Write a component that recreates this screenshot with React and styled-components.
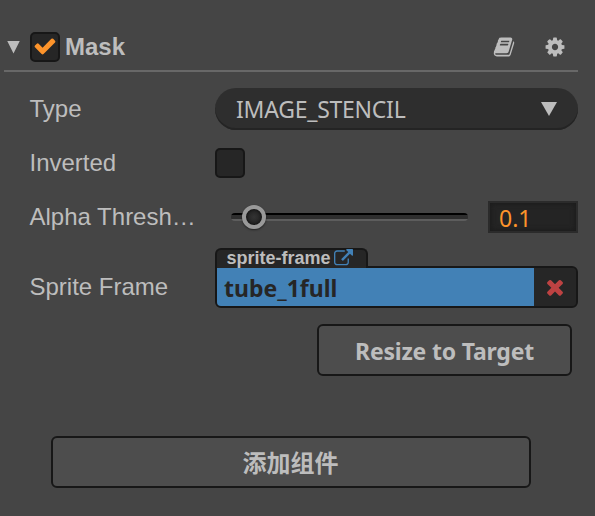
import React from "react";
import styled, { createGlobalStyle } from "styled-components";

const GlobalStyle = createGlobalStyle`
  *, *::before, *::after { box-sizing: border-box; }
  body { margin: 0; background: #454545; }
`;

const sans = `"Liberation Sans", Arial, sans-serif`;
const ui = `"Noto Sans", "Open Sans", "Noto Sans CJK SC", sans-serif`;

const Panel = styled.main`
  width: 595px;
  height: 516px;
  padding: 22px 17px 0 4px;
  background: #454545;
  color: #bdbdbd;
  font: 24px/28px ${sans};
  overflow: hidden;
`;

const Header = styled.header`
  display: flex;
  align-items: center;
  height: 50px;
  padding: 2px 12px 0 3px;
  border-bottom: 2px solid #686868;
`;

const Arrow = styled.span`
  width: ${(p) => p.$w}px;
  height: ${(p) => p.$h}px;
  flex: none;
  background: #bdbdbd;
  clip-path: polygon(0 0, 100% 0, 50% 100%);
`;

const Check = styled.span`
  display: grid;
  place-items: center;
  width: 30px;
  height: 30px;
  flex: none;
  border: 2px solid #171717;
  border-radius: 5px;
  background: #262626;
  color: #fd942b;
`;

const HeaderCheck = styled(Check)`
  margin: 0 5px 0 10px;
  padding-bottom: 2px;
`;

const Title = styled.h1`
  flex: 1;
  margin: 0;
  font-size: 24px;
  line-height: 28px;
`;

const Tools = styled.div`
  display: flex;
  gap: 29.5px;
`;

const Glyph = styled.svg`
  display: block;
  width: ${(p) => p.$size}px;
  height: ${(p) => p.$size}px;
  fill: currentColor;
`;

const Row = styled.div`
  display: flex;
  align-items: center;
  height: 54px;
  padding-left: 25.5px;
`;

const AssetRow = styled(Row)`
  height: 86px;
`;

const Rows = styled.section`
  padding-top: 10px;
`;

const Label = styled.span`
  flex: none;
  width: 170px;
  margin-right: 15.5px;
  white-space: nowrap;
`;

const Select = styled.div`
  display: flex;
  flex: 1;
  align-items: center;
  justify-content: space-between;
  height: 42px;
  padding: 0 21px;
  border-radius: 21px;
  background: #2e2e2e;
  box-shadow: inset 0 -2px 0 #242424;
  font: 23px/32px ${ui};
  letter-spacing: -0.25px;
`;

const Slider = styled.div`
  display: flex;
  align-items: center;
  width: 237px;
  height: 8px;
  margin: 0 20px 0 16px;
  padding-left: 11px;
  border-radius: 4px;
  background: linear-gradient(#000 0 2px, #2e2e2e 2px 6px, #5d5d5d 6px 8px);
`;

const Thumb = styled.span`
  width: 24px;
  height: 24px;
  border: 4px solid #999;
  border-radius: 50%;
  background: radial-gradient(circle, #333 0, #202020 75%);
  box-shadow: 0 1px 2px #222, inset 0 0 2px 1px #161616;
`;

const NumberBox = styled.div`
  width: 90px;
  height: 32px;
  padding-left: 9px;
  border: 2px solid #2b2b2b;
  background: #242424;
  box-shadow: inset 0 0 5px 1px #1b1b1b;
  color: #fd942b;
  font: 23px/31px ${ui};
`;

const AssetField = styled.div`
  display: flex;
  flex: 1;
  flex-direction: column;
  align-items: flex-start;
  align-self: flex-start;
  padding-top: 4px;
`;

const AssetTab = styled.div`
  display: flex;
  z-index: 1;
  width: 153px;
  height: 20px;
  margin-bottom: -2px;
  padding-left: 9.5px;
  gap: 3.5px;
  border: 2px solid #171717;
  border-bottom: 0;
  border-radius: 6px 6px 0 0;
  background: #262626;
  font: bold 18px/16px ${sans};
  white-space: nowrap;

  svg { color: #4281b6; margin-top: -1px; }
`;

const AssetBox = styled.div`
  display: flex;
  width: 100%;
  height: 42px;
  border: 2px solid #171717;
  border-radius: 0 6px 6px 6px;
  overflow: hidden;
  background: #262626;
`;

const AssetName = styled.div`
  width: 317px;
  padding-left: 7px;
  background: #4281b6;
  color: #262626;
  font: bold 23px/40px ${ui};
`;

const ClearButton = styled.button`
  display: grid;
  flex: 1;
  place-items: center;
  padding: 0 0 1px;
  border: 0;
  background: #262626;
  color: #bd4242;
`;

const Button = styled.button`
  display: block;
  width: ${(p) => p.$w}px;
  height: 52px;
  margin: ${(p) => p.$margin};
  padding: 2px 0 0;
  border: 2px solid #171717;
  border-radius: 6px;
  background: #4d4d4d;
  color: #bdbdbd;
  font: bold 23px/32px ${ui};
  letter-spacing: -0.2px;
`;

const AddButton = styled(Button)`
  padding: 0 1px 0 0;
  font: bold 24px/32px "Noto Sans CJK SC", sans-serif;
  letter-spacing: 0;
`;

const paths = {
  check:
    "M1671 566q0 40-28 68l-724 724-136 136q-28 28-68 28t-68-28l-136-136-362-362q-28-28-28-68t28-68l136-136q28-28 68-28t68 28l294 295 656-657q28-28 68-28t68 28l136 136q28 28 28 68z",
  times:
    "M1490 1322q0 40-28 68l-136 136q-28 28-68 28t-68-28l-294-294-294 294q-28 28-68 28t-68-28l-136-136q-28-28-28-68t28-68l294-294-294-294q-28-28-28-68t28-68l136-136q28-28 68-28t68 28l294 294 294-294q28-28 68-28t68 28l136 136q28 28 28 68t-28 68l-294 294 294 294q28 28 28 68z",
  cog: "M1152 896q0-106-75-181t-181-75-181 75-75 181 75 181 181 75 181-75 75-181zm512-109v222q0 12-8 23t-20 13l-185 28q-19 54-39 91 35 50 107 138 10 12 10 25t-9 23q-27 37-99 108t-94 71q-12 0-26-9l-138-108q-44 23-91 38-16 136-29 186-7 28-36 28h-222q-14 0-24.5-8.5t-11.5-21.5l-28-184q-49-16-90-37l-141 107q-10 9-25 9-14 0-25-11-126-114-165-168-7-10-7-23 0-12 8-23 15-21 51-66.5t54-70.5q-27-50-41-99l-183-27q-13-2-21-12.5t-8-23.5v-222q0-12 8-23t19-13l186-28q14-46 39-92-40-57-107-138-10-12-10-24 0-10 9-23 26-36 98.5-107.5t94.5-71.5q13 0 26 10l138 107q44-23 91-38 16-136 29-186 7-28 36-28h222q14 0 24.5 8.5t11.5 21.5l28 184q49 16 90 37l142-107q9-9 24-9 13 0 25 10 129 119 165 170 7 8 7 22 0 12-8 23-15 21-51 66.5t-54 70.5q26 50 41 98l183 28q13 2 21 12.5t8 23.5z",
  book: "M1703 478q40 57 18 129l-275 906q-19 64-76.5 107.5t-122.5 43.5h-923q-77 0-148.5-53.5t-99.5-131.5q-24-67-2-127 0-4 3-27t4-37q1-8-3-21.5t-3-19.5q2-11 8-21t16.5-23.5 16.5-23.5q23-38 45-91.5t30-91.5q3-10 .5-30t-.5-28q3-11 17-28t17-23q21-36 42-92t25-90q1-9-2.5-32t.5-28q4-13 22-30.5t22-22.5q19-26 42.5-84.5t27.5-96.5q1-8-3-25.5t-2-26.5q2-8 9-18t18-23 17-21q8-12 16.5-30.5t15-35 16-36 19.5-32 26.5-23.5 36-11.5 47.5 5.5l-1 3q38-9 51-9h761q74 0 114 56t18 130l-274 906q-36 119-71.5 153.5t-128.5 34.5h-869q-27 0-38 15-11 16-1 43 24 70 144 70h923q29 0 56-15.5t35-41.5l300-987q7-22 5-57 38 15 59 43zm-1064 2q-4 13 2 22.5t20 9.5h608q13 0 25.5-9.5t16.5-22.5l21-64q4-13-2-22.5t-20-9.5h-608q-13 0-25.5 9.5t-16.5 22.5zm-83 256q-4 13 2 22.5t20 9.5h608q13 0 25.5-9.5t16.5-22.5l21-64q4-13-2-22.5t-20-9.5h-608q-13 0-25.5 9.5t-16.5 22.5z",
  link: "M1408 928v320q0 119-84.5 203.5t-203.5 84.5h-832q-119 0-203.5-84.5t-84.5-203.5v-832q0-119 84.5-203.5t203.5-84.5h704q14 0 23 9t9 23v64q0 14-9 23t-23 9h-704q-66 0-113 47t-47 113v832q0 66 47 113t113 47h832q66 0 113-47t47-113v-320q0-14 9-23t23-9h64q14 0 23 9t9 23zm384-864v512q0 26-19 45t-45 19-45-19l-176-176-652 652q-10 10-23 10t-23-10l-114-114q-10-10-10-23t10-23l652-652-176-176q-19-19-19-45t19-45 45-19h512q26 0 45 19t19 45z",
};

function Icon({ name, size }) {
  return (
    <Glyph $size={size} viewBox="0 0 1792 1792" aria-hidden="true">
      <path d={paths[name]} />
    </Glyph>
  );
}

export default function App() {
  return (
    <Panel>
      <GlobalStyle />
      <Header>
        <Arrow $w={13} $h={13} />
        <HeaderCheck>
          <Icon name="check" size={24} />
        </HeaderCheck>
        <Title>Mask</Title>
        <Tools>
          <Icon name="book" size={22} />
          <Icon name="cog" size={22} />
        </Tools>
      </Header>
      <Rows>
        <Row>
          <Label>Type</Label>
          <Select>
            IMAGE_STENCIL
            <Arrow $w={16} $h={14} />
          </Select>
        </Row>
        <Row>
          <Label>Inverted</Label>
          <Check />
        </Row>
        <Row>
          <Label>Alpha Thresh…</Label>
          <Slider>
            <Thumb />
          </Slider>
          <NumberBox>0.1</NumberBox>
        </Row>
        <AssetRow>
          <Label>Sprite Frame</Label>
          <AssetField>
            <AssetTab>
              sprite-frame
              <Icon name="link" size={19} />
            </AssetTab>
            <AssetBox>
              <AssetName>tube_1full</AssetName>
              <ClearButton aria-label="Clear">
                <Icon name="times" size={24} />
              </ClearButton>
            </AssetBox>
          </AssetField>
        </AssetRow>
      </Rows>
      <Button $w={255} $margin="-6px 0 60px 313px">
        Resize to Target
      </Button>
      <AddButton $w={480} $margin="0 0 0 47px">
        添加组件
      </AddButton>
    </Panel>
  );
}
